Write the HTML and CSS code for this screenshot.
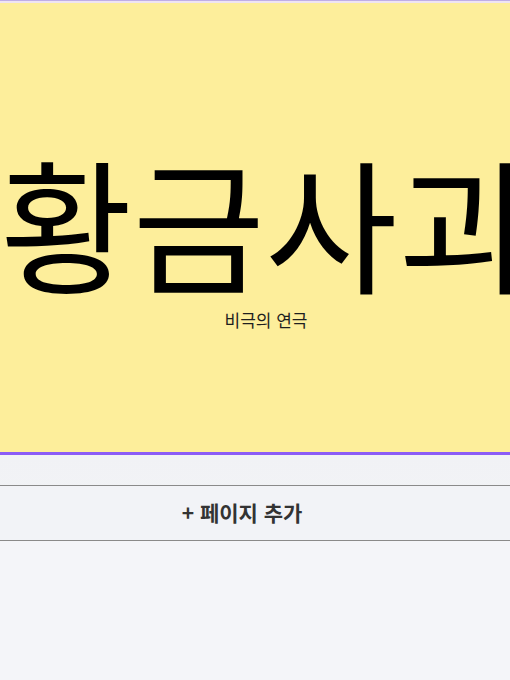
FILE: index.html
```html
<!DOCTYPE html>
<html lang="ko">

<head>
  <meta charset="UTF-8">
  <meta name="viewport" content="width=device-width, initial-scale=1.0">
  <title>황금사괴</title>
  <link rel="stylesheet" href="styles.css">
</head>

<body>
  <div class="slide-list">
    <div class="slide slide-active">
      <div class="slide-inner">
        <h1 class="slide-title">황금사괴</h1>
        <p class="slide-sub">비극의 연극</p>
      </div>
    </div>

    <div class="add-page">
      <a href="javascript:;" class="add-page-btn">+ 페이지 추가</a>
    </div>
  </div>
</body>

</html>
```

FILE: styles.css
```css
body,
div,
p,
h1,
a {
  padding: 0px;
  margin: 0px;
}

body {
  background: #f4f5f9;
  font-family: "Noto Sans CJK KR", "Noto Sans", sans-serif;
  overflow: hidden;
}

a {
  text-decoration: none;
  color: #333;
}

.slide-list {
  width: 510px;
  background: linear-gradient(#eaebef, #f2f3f6 520px);
}

.slide {
  border-top: 1px solid #bfaee6;
  border-bottom: 3px solid #8b5cf6;
  box-shadow: inset 0 2px 0 #efe4f2;
}

.slide-inner {
  height: 449px;
  margin-top: 2px;
  background: #fdee9b;
  overflow: hidden;
}

.slide-title {
  padding-top: 145px;
  font-size: 144px;
  font-weight: 400;
  line-height: 144px;
  color: #000;
  white-space: nowrap;
}

.slide-sub {
  margin-top: 16px;
  padding-left: 22px;
  text-align: center;
  font-size: 17px;
  line-height: 24px;
  color: #1f1f1f;
}

.add-page {
  margin-top: 30px;
  border-top: 1px solid #8a8a8a;
  border-bottom: 1px solid #8a8a8a;
  background: #f2f3f7;
}

.add-page-btn {
  display: block;
  height: 54px;
  padding-right: 26px;
  line-height: 53px;
  text-align: center;
  font-size: 21px;
  font-weight: 700;
}
```
